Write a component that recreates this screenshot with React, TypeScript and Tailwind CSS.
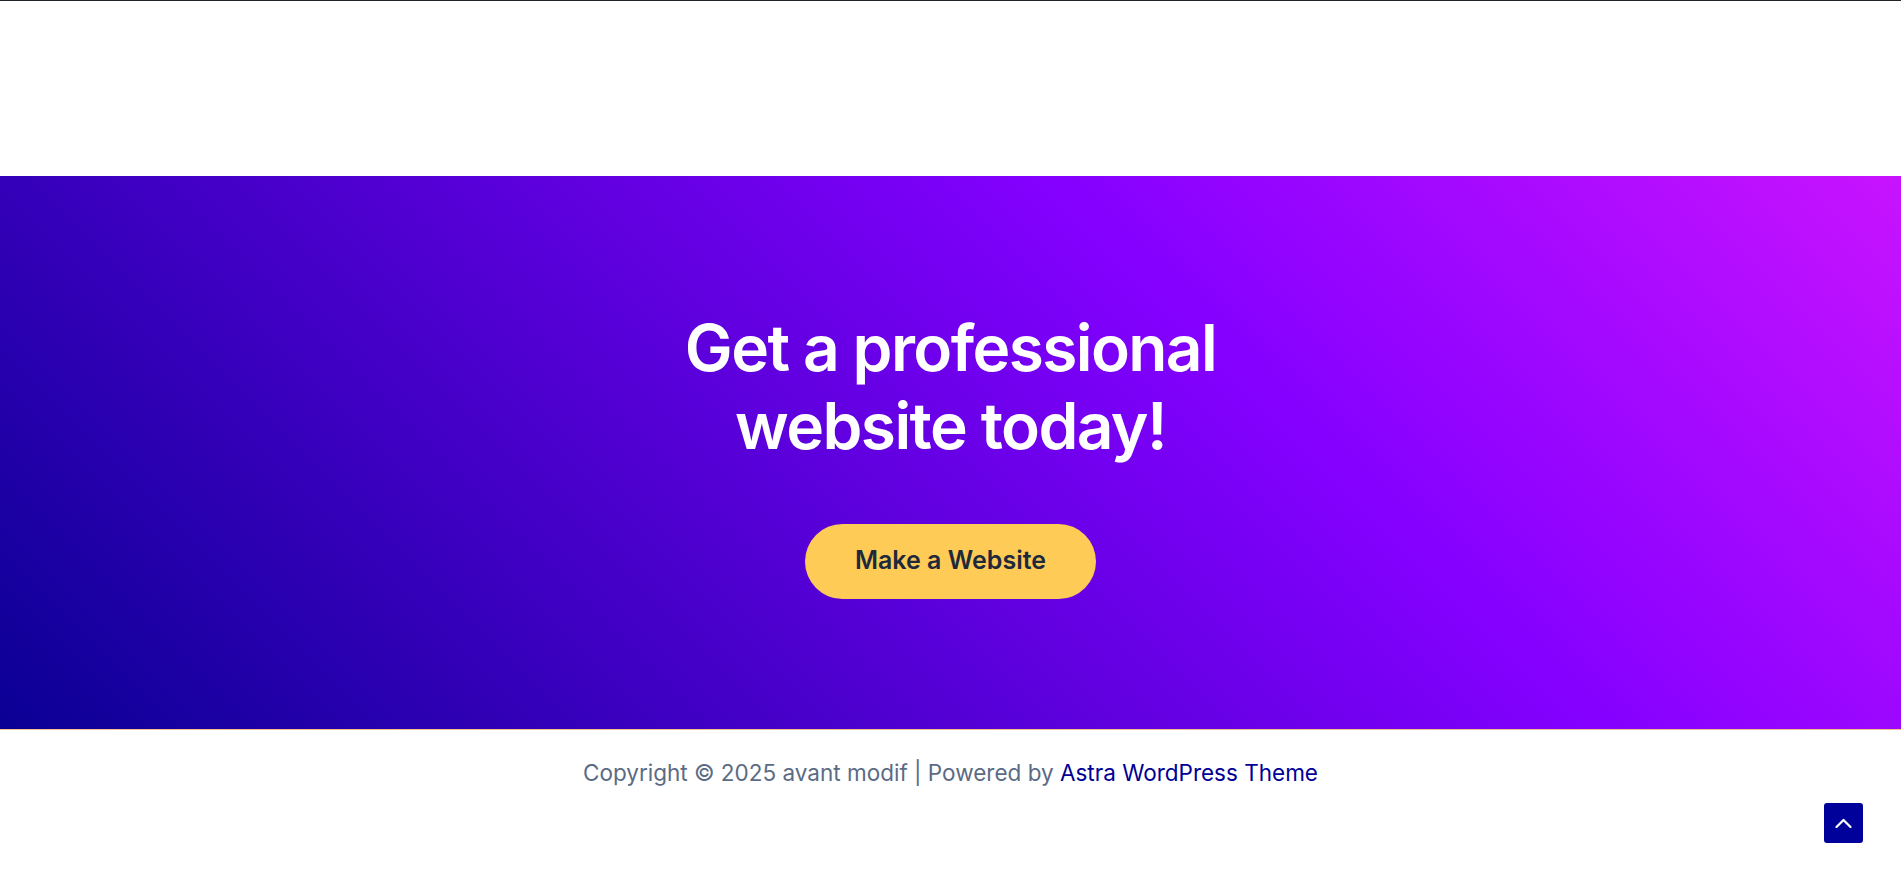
const App = () => {
    return (
        <div className="min-h-screen bg-white flex flex-col font-['Inter',sans-serif]">
            {/* header area */}
            <div className="h-[176px] border-t border-[#1e2428]" />

            <section className="h-[554px] flex flex-col items-center justify-center border-b border-[#f3c08c] bg-[linear-gradient(45deg,#0a0094_0%,#8400ff_65%,#c813ff_100%)]">
                <h2 className="mt-[2px] text-white text-center text-[64px] leading-[78px] font-semibold tracking-[-0.025em]">
                    Get a professional
                    <br />
                    website today!
                </h2>
                <a
                    href="#"
                    className="mt-[59px] w-[291px] h-[75px] rounded-full bg-[#ffcb57] text-[#1e293b] text-[25px] font-semibold flex items-center justify-center"
                >
                    Make a Website
                </a>
            </section>

            <footer className="pt-[28px] text-center text-[22.5px] leading-[30px] text-[#5b6b84]">
                Copyright © 2025 avant modif | Powered by{" "}
                <a href="#" className="text-[#000096]">
                    Astra WordPress Theme
                </a>
            </footer>

            <button className="fixed right-[38px] bottom-[35px] w-[39px] h-[40px] rounded-[3px] bg-[#00009a] text-white flex items-center justify-center">
                <svg width="17" height="10" viewBox="0 0 17 10" fill="none">
                    <polyline
                        points="1.5,9 8.5,2 15.5,9"
                        stroke="currentColor"
                        strokeWidth="2.2"
                        strokeLinecap="round"
                        strokeLinejoin="round"
                    />
                </svg>
            </button>
        </div>
    );
};

export default App;
